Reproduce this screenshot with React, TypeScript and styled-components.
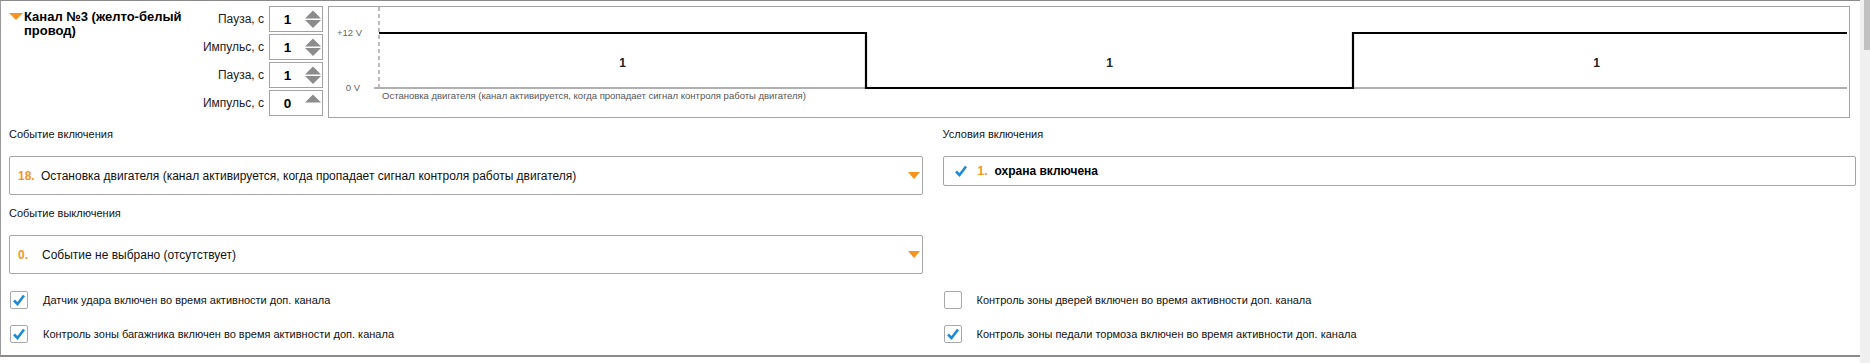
import React from "react";
import styled, { createGlobalStyle } from "styled-components";

const ORANGE = "#f7941d";
const BLUE = "#1e8ad6";

const Global = createGlobalStyle`
  body {
    margin: 0;
    background: #fff;
    font-family: "Liberation Sans", Arial, sans-serif;
    color: #111;
  }
`;

const Frame = styled.div`
  display: flex;
  width: 1870px;
  height: 363px;
  overflow: hidden;
  background: #fff;
`;

const Panel = styled.div`
  flex: 1;
  align-self: flex-start;
  border-top: 1px solid #8a8a8a;
  border-left: 1px solid #9a9a9a;
  border-bottom: 2px solid #8a8a8a;
  padding: 5px 4px 12px 8px;
`;

const Header = styled.div`
  display: flex;
  align-items: flex-start;
`;

const Title = styled.div`
  width: 190px;
  display: flex;
  align-items: flex-start;
  gap: 1px;
  padding-top: 4px;
  font-weight: bold;
  font-size: 13px;
  line-height: 14px;
  color: #000;

  svg {
    flex: none;
    margin-top: 3px;
  }
`;

const Params = styled.div`
  display: grid;
  grid-template-columns: 65px 54px;
  grid-auto-rows: 26px;
  column-gap: 5px;
  row-gap: 2px;
`;

const ParamLabel = styled.div`
  display: flex;
  align-items: center;
  justify-content: flex-end;
  font-size: 12px;
  color: #222;
`;

const Spin = styled.div`
  display: flex;
  align-items: center;
  border: 1px solid #a3a3a3;
  background: #fff;
`;

const SpinValue = styled.span`
  flex: 1;
  text-align: center;
  font-weight: bold;
  font-size: 13.5px;
  color: #000;
`;

const SpinArrows = styled.svg`
  flex: none;
  width: 16px;
  height: 19px;
  margin-right: 1px;
`;

const Chart = styled.div`
  flex: 1;
  height: 110px;
  margin: 0 6px 0 5px;
  border: 1px solid #a3a3a3;
  background: #fff;

  svg {
    display: block;
    font-family: "Liberation Sans", Arial, sans-serif;
  }
`;

const Columns = styled.div`
  display: grid;
  grid-template-columns: 1fr 1fr;
  column-gap: 20px;
`;

const Stack = styled.div`
  display: flex;
  flex-direction: column;
`;

const FieldLabel = styled.div<{ $gap: number }>`
  margin-top: ${(p) => p.$gap}px;
  font-size: 11px;
  line-height: 14px;
  color: #111;
`;

const Select = styled.div`
  margin-top: 15px;
  height: 37px;
  display: flex;
  align-items: center;
  border: 1px solid #a6a6a6;
  border-radius: 2px;
  padding: 0 2px 0 8px;
  font-size: 12px;
  color: #111;
`;

const Num = styled.span<{ $w: number }>`
  flex: none;
  width: ${(p) => p.$w}px;
  color: ${ORANGE};
  font-weight: bold;
  font-size: 12px;
`;

const SelectText = styled.span`
  flex: 1;
`;

const CondBox = styled.div`
  margin-top: 15px;
  height: 28px;
  display: flex;
  align-items: center;
  border: 1px solid #a6a6a6;
  border-radius: 2px;
  padding-left: 10px;
  font-size: 12px;

  svg {
    margin-right: 10px;
  }
`;

const CondText = styled.span`
  font-weight: bold;
  color: #000;
`;

const Checks = styled.div`
  display: grid;
  grid-template-columns: 1fr 1fr;
  column-gap: 20px;
  row-gap: 16px;
  margin-top: 17px;
`;

const CheckRow = styled.label`
  display: flex;
  align-items: center;
  gap: 15px;
  height: 18px;
  padding-left: 1px;
  font-size: 11px;
  color: #111;
`;

const Box = styled.span`
  flex: none;
  width: 16px;
  height: 16px;
  border: 1px solid #a9a9a9;
  border-radius: 2px;
  background: #fff;
  display: flex;
  align-items: center;
  justify-content: center;
`;

const Track = styled.div`
  flex: none;
  width: 10px;
  height: 363px;
  background: #f0f0f0;
`;

const Thumb = styled.div`
  width: 6px;
  height: 50px;
  margin-left: 4px;
  background: #c1c1c1;
`;

const Tick = () => (
  <svg width="14" height="14" viewBox="0 0 14 14">
    <path d="M2 7.5 L5.5 11 L12 2.5" fill="none" stroke={BLUE} strokeWidth="2.6" />
  </svg>
);

const Caret = ({ w = 12, h = 7, color = ORANGE }: { w?: number; h?: number; color?: string }) => (
  <svg width={w} height={h} viewBox={`0 0 ${w} ${h}`}>
    <path d={`M0 0 H${w} L${w / 2} ${h} Z`} fill={color} />
  </svg>
);

const SpinBox = ({ value, down = true }: { value: number; down?: boolean }) => (
  <Spin>
    <SpinValue>{value}</SpinValue>
    <SpinArrows viewBox="0 0 16 19">
      <path d="M0 8.5 L8 0.5 L16 8.5 Z" fill="#8c8c8c" />
      {down && <path d="M0 10 L16 10 L8 18 Z" fill="#8c8c8c" />}
    </SpinArrows>
  </Spin>
);

const Check = ({ on, children }: { on: boolean; children: React.ReactNode }) => (
  <CheckRow>
    <Box>{on && <Tick />}</Box>
    {children}
  </CheckRow>
);

const params = [
  { label: "Пауза, с", value: 1 },
  { label: "Импульс, с", value: 1 },
  { label: "Пауза, с", value: 1 },
  { label: "Импульс, с", value: 0, down: false },
];

const Wave = () => {
  const x0 = 50;
  const seg = 487;
  const hi = 26;
  const lo = 81;
  return (
    <svg width="100%" height="110">
      <line x1={x0} y1={0} x2={x0} y2={lo} stroke="#a8a8a8" strokeWidth="1.5" strokeDasharray="4 3" />
      <line x1={45} y1={lo} x2={1518} y2={lo} stroke="#b0b0b0" strokeWidth="2" />
      <text x={33} y={hi} fontSize="9.5" fill="#666" textAnchor="end" dominantBaseline="middle">+12 V</text>
      <text x={31} y={lo} fontSize="9.5" fill="#666" textAnchor="end" dominantBaseline="middle">0 V</text>
      <path
        d={`M${x0} ${hi} H${x0 + seg} V${lo} H${x0 + seg * 2} V${hi} H1518`}
        fill="none"
        stroke="#000"
        strokeWidth="2.2"
        strokeLinejoin="miter"
      />
      {[0, 1, 2].map((i) => (
        <text key={i} x={x0 + seg * i + seg / 2} y={57} fontSize="12" fontWeight="bold" fill="#222" textAnchor="middle" dominantBaseline="middle">
          1
        </text>
      ))}
      <text x={53} y={89} fontSize="9.5" fill="#555" dominantBaseline="middle">
        Остановка двигателя (канал активируется, когда пропадает сигнал контроля работы двигателя)
      </text>
    </svg>
  );
};

export default function App() {
  return (
    <Frame>
      <Global />
      <Panel>
        <Header>
          <Title>
            <Caret w={14} h={7} />
            <span>Канал №3 (желто-белый провод)</span>
          </Title>
          <Params>
            {params.map((p, i) => (
              <React.Fragment key={i}>
                <ParamLabel>{p.label}</ParamLabel>
                <SpinBox value={p.value} down={p.down !== false} />
              </React.Fragment>
            ))}
          </Params>
          <Chart>
            <Wave />
          </Chart>
        </Header>

        <Columns>
          <Stack>
            <FieldLabel $gap={9}>Событие включения</FieldLabel>
            <Select>
              <Num $w={23}>18.</Num>
              <SelectText>Остановка двигателя (канал активируется, когда пропадает сигнал контроля работы двигателя)</SelectText>
              <Caret w={12} h={7} />
            </Select>
            <FieldLabel $gap={11}>Событие выключения</FieldLabel>
            <Select>
              <Num $w={24}>0.</Num>
              <SelectText>Событие не выбрано (отсутствует)</SelectText>
              <Caret w={12} h={7} />
            </Select>
          </Stack>
          <Stack>
            <FieldLabel $gap={9}>Условия включения</FieldLabel>
            <CondBox>
              <Tick />
              <Num $w={17}>1.</Num>
              <CondText>охрана включена</CondText>
            </CondBox>
          </Stack>
        </Columns>

        <Checks>
          <Check on>Датчик удара включен во время активности доп. канала</Check>
          <Check on={false}>Контроль зоны дверей включен во время активности доп. канала</Check>
          <Check on>Контроль зоны багажника включен во время активности доп. канала</Check>
          <Check on>Контроль зоны педали тормоза включен во время активности доп. канала</Check>
        </Checks>
      </Panel>
      <Track>
        <Thumb />
      </Track>
    </Frame>
  );
}
